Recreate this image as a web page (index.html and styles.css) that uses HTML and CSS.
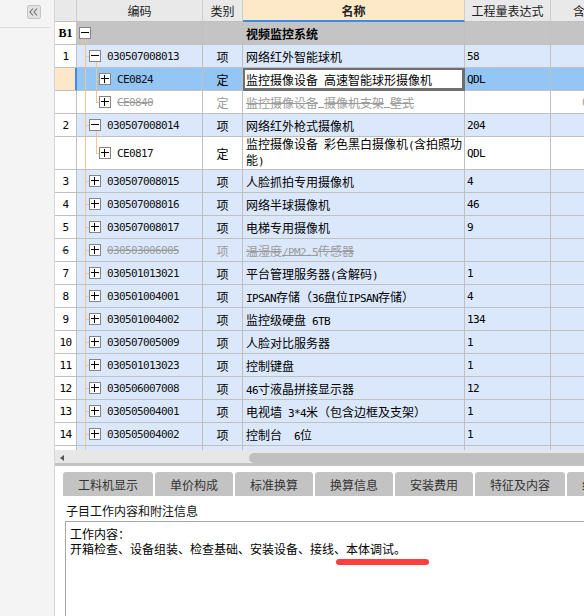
FILE: index.html
```html
<!DOCTYPE html>
<html lang="zh-CN">
<head>
<meta charset="utf-8">
<title>分部分项</title>
<link rel="stylesheet" href="styles.css">
</head>
<body>
<div class="app">
  <aside class="side">
    <div class="side-top">
      <span class="collapse"><svg width="12" height="12" viewBox="0 0 12 12"><path d="M5 2.5 L2 6 L5 9.5 M9 2.5 L6 6 L9 9.5" fill="none" stroke="#6e6e6e" stroke-width="1.1"/></svg></span>
    </div>
  </aside>
  <main class="main">
    <div class="grid-wrap">
      <div class="row head">
        <div class="c"></div>
        <div class="c">编码</div>
        <div class="c">类别</div>
        <div class="c hname">名称</div>
        <div class="c">工程量表达式</div>
        <div class="c hlast">含量</div>
      </div>
      <div class="row b1">
        <div class="c no"><b class="b1n">B1</b></div>
        <div class="c code tb1"><i class="bx"></i></div>
        <div class="c cat"></div>
        <div class="c nm"><b>视频监控系统</b></div>
        <div class="c ex"></div>
        <div class="c"></div>
      </div>
      <div class="row">
        <div class="c no m">1</div>
        <div class="c code l1 open"><i class="bx"></i><span class="m">030507008013</span></div>
        <div class="c cat">项</div>
        <div class="c nm">网络红外智能球机</div>
        <div class="c ex m">58</div>
        <div class="c"></div>
      </div>
      <div class="row sel">
        <div class="c no"></div>
        <div class="c code l2"><i class="bx p"></i><span class="m">CE0824</span></div>
        <div class="c cat">定</div>
        <div class="c nm edit"><span>监控摄像设备<span class="m"> </span>高速智能球形摄像机</span></div>
        <div class="c ex m">QDL</div>
        <div class="c"></div>
      </div>
      <div class="row w">
        <div class="c no"></div>
        <div class="c code l2 last"><i class="bx p"></i><span class="m del">CE0840</span></div>
        <div class="c cat gray">定</div>
        <div class="c nm"><span class="del">监控摄像设备<span class="m"> </span>摄像机支架<span class="m"> </span>壁式</span></div>
        <div class="c ex"></div>
        <div class="c lastc"><span class="m gray">0</span></div>
      </div>
      <div class="row">
        <div class="c no m">2</div>
        <div class="c code l1 open"><i class="bx"></i><span class="m">030507008014</span></div>
        <div class="c cat">项</div>
        <div class="c nm">网络红外枪式摄像机</div>
        <div class="c ex m">204</div>
        <div class="c"></div>
      </div>
      <div class="row w tall">
        <div class="c no"></div>
        <div class="c code l2 last"><i class="bx p"></i><span class="m">CE0817</span></div>
        <div class="c cat">定</div>
        <div class="c nm"><span class="t2">监控摄像设备<span class="m"> </span>彩色黑白摄像机<span class="m">(</span>含拍照功能<span class="m">)</span></span></div>
        <div class="c ex m">QDL</div>
        <div class="c"></div>
      </div>
      <div class="row">
        <div class="c no m">3</div>
        <div class="c code l1"><i class="bx p"></i><span class="m">030507008015</span></div>
        <div class="c cat">项</div>
        <div class="c nm">人脸抓拍专用摄像机</div>
        <div class="c ex m">4</div>
        <div class="c"></div>
      </div>
      <div class="row">
        <div class="c no m">4</div>
        <div class="c code l1"><i class="bx p"></i><span class="m">030507008016</span></div>
        <div class="c cat">项</div>
        <div class="c nm">网络半球摄像机</div>
        <div class="c ex m">46</div>
        <div class="c"></div>
      </div>
      <div class="row">
        <div class="c no m">5</div>
        <div class="c code l1"><i class="bx p"></i><span class="m">030507008017</span></div>
        <div class="c cat">项</div>
        <div class="c nm">电梯专用摄像机</div>
        <div class="c ex m">9</div>
        <div class="c"></div>
      </div>
      <div class="row">
        <div class="c no m"><span class="strike">6</span></div>
        <div class="c code l1"><i class="bx p"></i><span class="m del">030503006005</span></div>
        <div class="c cat gray">项</div>
        <div class="c nm"><span class="del">温湿度<span class="m">/PM2.5</span>传感器</span></div>
        <div class="c ex"></div>
        <div class="c"></div>
      </div>
      <div class="row">
        <div class="c no m">7</div>
        <div class="c code l1"><i class="bx p"></i><span class="m">030501013021</span></div>
        <div class="c cat">项</div>
        <div class="c nm"><span>平台管理服务器<span class="m">(</span>含解码<span class="m">)</span></span></div>
        <div class="c ex m">1</div>
        <div class="c"></div>
      </div>
      <div class="row">
        <div class="c no m">8</div>
        <div class="c code l1"><i class="bx p"></i><span class="m">030501004001</span></div>
        <div class="c cat">项</div>
        <div class="c nm"><span><span class="m">IPSAN</span>存储（<span class="m">36</span>盘位<span class="m">IPSAN</span>存储）</span></div>
        <div class="c ex m">4</div>
        <div class="c"></div>
      </div>
      <div class="row">
        <div class="c no m">9</div>
        <div class="c code l1"><i class="bx p"></i><span class="m">030501004002</span></div>
        <div class="c cat">项</div>
        <div class="c nm"><span>监控级硬盘<span class="m"> 6TB</span></span></div>
        <div class="c ex m">134</div>
        <div class="c"></div>
      </div>
      <div class="row">
        <div class="c no m">10</div>
        <div class="c code l1"><i class="bx p"></i><span class="m">030507005009</span></div>
        <div class="c cat">项</div>
        <div class="c nm">人脸对比服务器</div>
        <div class="c ex m">1</div>
        <div class="c"></div>
      </div>
      <div class="row">
        <div class="c no m">11</div>
        <div class="c code l1"><i class="bx p"></i><span class="m">030501013023</span></div>
        <div class="c cat">项</div>
        <div class="c nm">控制键盘</div>
        <div class="c ex m">1</div>
        <div class="c"></div>
      </div>
      <div class="row">
        <div class="c no m">12</div>
        <div class="c code l1"><i class="bx p"></i><span class="m">030506007008</span></div>
        <div class="c cat">项</div>
        <div class="c nm"><span><span class="m">46</span>寸液晶拼接显示器</span></div>
        <div class="c ex m">12</div>
        <div class="c"></div>
      </div>
      <div class="row">
        <div class="c no m">13</div>
        <div class="c code l1"><i class="bx p"></i><span class="m">030505004001</span></div>
        <div class="c cat">项</div>
        <div class="c nm"><span>电视墙<span class="m"> 3*4</span>米（包含边框及支架）</span></div>
        <div class="c ex m">1</div>
        <div class="c"></div>
      </div>
      <div class="row">
        <div class="c no m">14</div>
        <div class="c code l1"><i class="bx p"></i><span class="m">030505004002</span></div>
        <div class="c cat">项</div>
        <div class="c nm"><span>控制台<span class="m">&nbsp;&nbsp;6</span>位</span></div>
        <div class="c ex m">1</div>
        <div class="c"></div>
      </div>
      <div class="row">
        <div class="c no m">15</div>
        <div class="c code l1"><i class="bx p"></i><span class="m">030505004003</span></div>
        <div class="c cat">项</div>
        <div class="c nm">操作台</div>
        <div class="c ex m">1</div>
        <div class="c"></div>
      </div>
    </div>
    <div class="hscroll"><span class="arrow"></span><span class="thumb"></span></div>
    <div class="tabs">
      <div class="tab wide">工料机显示</div>
      <div class="tab">单价构成</div>
      <div class="tab">标准换算</div>
      <div class="tab">换算信息</div>
      <div class="tab">安装费用</div>
      <div class="tab wide">特征及内容</div>
      <div class="tab">组价方案</div>
    </div>
    <section class="detail">
      <div class="detail-label">子目工作内容和附注信息</div>
      <div class="memo">
        <div>工作内容：</div>
        <div>开箱检查、设备组装、检查基础、安装设备、接线、本体调试。</div>
        <span class="mark"></span>
      </div>
    </section>
  </main>
</div>
</body>
</html>
```

FILE: styles.css
```css
* { box-sizing: border-box; margin: 0; padding: 0; }
html, body { width: 584px; height: 616px; overflow: hidden; }
body {
  font-family: "Noto Sans CJK SC", "Noto Sans", sans-serif;
  font-size: 12px;
  color: #000;
  background: #fff;
  --tree: linear-gradient(#f5c68a, #f5c68a);
}
.app { display: flex; height: 616px; }

.side {
  width: 55px;
  flex: none;
  background: #f4f4f4;
  border-right: 1px solid #d6d6d6;
}
.side-top {
  height: 28px;
  margin-right: 4px;
  border-bottom: 1px solid #dcdcdc;
  padding: 5px 0 0 27px;
}
.collapse {
  display: block;
  width: 14px;
  height: 14px;
  border: 1px solid #c6c6c6;
  border-radius: 2px;
  background: #e2e2e2;
}
.collapse svg { display: block; }

.main {
  flex: 1;
  min-width: 0;
  overflow: hidden;
  display: flex;
  flex-direction: column;
}

.grid-wrap { height: 450px; overflow: hidden; flex: none; }
.row {
  display: grid;
  grid-template-columns: 22px 126px 40px 222px 86px 60px;
  width: 556px;
  height: 23px;
  --bg: #dbe8fc;
}
.row.tall { height: 33px; }
.row.w { --bg: #fff; }
.row.sel { --bg: #93c5f5; }
.row.b1 { --bg: #c4c4c4; }

.c {
  border-right: 1px solid #c0c0c0;
  border-bottom: 1px solid #c0c0c0;
  display: flex;
  align-items: center;
  white-space: nowrap;
  overflow: hidden;
  background-color: var(--bg);
}
.m {
  font-family: "DejaVu Sans Mono", "Liberation Mono", monospace;
  font-size: 11px;
  letter-spacing: -0.62px;
}

.head { height: 22px; }
.head .c {
  background: #e9e9e9;
  justify-content: center;
  color: #222;
  border-right-color: #cdcdcd;
}
.head .hname {
  background: #fde8c8;
  border-bottom: 2px solid #3a8ee6;
  font-weight: bold;
}
.head .hlast { justify-content: flex-start; padding-left: 22px; }

.no { justify-content: center; background-color: #fff; }
.sel .no {
  background-color: #fde7c8;
  border-right-color: #3d8de6;
  box-shadow: inset -1px 0 #3d8de6;
}
.b1n { font-family: "Liberation Serif", serif; font-size: 12px; font-weight: bold; }
.cat { justify-content: center; }
.nm { padding-left: 3px; }
.ex { padding-left: 2px; }
.lastc { padding-left: 31px; }
.edit {
  background-color: #fff;
  border-right-color: #6f6f6f;
  border-bottom-color: #6f6f6f;
  box-shadow: inset 0 0 0 2px #6f6f6f;
}
.t2 { white-space: normal; line-height: 14px; }

.gray { color: #9b9b9b; }
.del { color: #9b9b9b; text-decoration: line-through; }
.strike { text-decoration: line-through; color: #333; }

/* tree */
.code { background-repeat: no-repeat; }
.code .m { margin-left: 6px; color: #111; }
.code .m.del { color: #9b9b9b; }
.tb1 {
  background-image: var(--tree);
  background-position: 8px 100%;
  background-size: 1px 50%;
}
.l1 {
  background-image: var(--tree), var(--tree);
  background-position: 8px 0, 8px 50%;
  background-size: 1px 100%, 4px 1px;
}
.l1.open {
  background-image: var(--tree), var(--tree), var(--tree);
  background-position: 8px 0, 8px 50%, 19px 100%;
  background-size: 1px 100%, 4px 1px, 1px 50%;
}
.l2 {
  background-image: var(--tree), var(--tree), var(--tree);
  background-position: 8px 0, 19px 0, 19px 50%;
  background-size: 1px 100%, 1px 100%, 3px 1px;
}
.l2.last { background-size: 1px 100%, 1px 50%, 3px 1px; }

.bx {
  display: block;
  flex: none;
  width: 12px;
  height: 12px;
  border: 1px solid #858585;
  background: #fff;
  position: relative;
}
.bx::before {
  content: "";
  position: absolute;
  left: 1px;
  right: 1px;
  top: 4px;
  height: 1px;
  background: #000;
}
.bx.p::after {
  content: "";
  position: absolute;
  top: 1px;
  bottom: 1px;
  left: 4px;
  width: 1px;
  background: #000;
}
.tb1 .bx { margin-left: 2px; }
.l1 .bx { margin-left: 12px; }
.l2 .bx { margin-left: 22px; }

/* scrollbar */
.hscroll {
  flex: none;
  height: 13px;
  background: #e7e7e7;
  display: flex;
  align-items: flex-start;
  padding-top: 3px;
}
.arrow {
  width: 0;
  height: 0;
  margin: 2px 0 0 5px;
  border-top: 3px solid transparent;
  border-bottom: 3px solid transparent;
  border-right: 4px solid #555;
}
.thumb {
  margin-left: 185px;
  flex: 1;
  height: 10px;
  border-radius: 5px 0 0 5px;
  background: #c0c0c0;
}

/* tabs */
.tabs {
  flex: none;
  height: 33px;
  border-top: 3px solid #c2c2c2;
  padding: 6px 0 0 8px;
  display: flex;
  gap: 2px;
}
.tab {
  flex: none;
  width: 78px;
  height: 24px;
  background: #c3c3c3;
  border-radius: 3px 3px 0 0;
  display: flex;
  align-items: center;
  justify-content: center;
  color: #333;
}
.tab.wide { width: 90px; }

/* detail */
.detail { flex: 1; padding: 6px 0 0 10px; }
.detail-label { line-height: 18px; padding-left: 1px; color: #111; }
.memo {
  position: relative;
  margin-top: 1px;
  width: calc(100% + 20px);
  height: 130px;
  border: 1px solid #a6a6a6;
  padding: 4px 0 0 4px;
  line-height: 15px;
  color: #000;
}
.mark {
  position: absolute;
  left: 270px;
  top: 37px;
  width: 93px;
  height: 6px;
  border-radius: 3px;
  background: #ff3e3e;
}
```
